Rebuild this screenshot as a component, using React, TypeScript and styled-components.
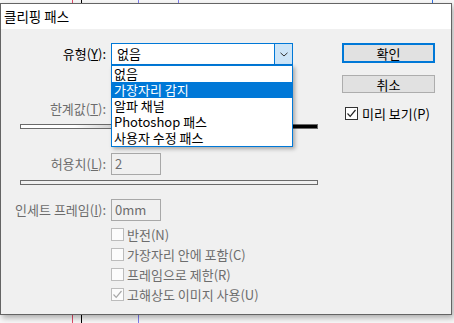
import styled, { createGlobalStyle } from "styled-components";

const GlobalStyle = createGlobalStyle`
  html, body {
    height: 100%;
  }
  body {
    margin: 0;
    font-family: "Noto Sans CJK KR", "Noto Sans", sans-serif;
    background:
      linear-gradient(#e04a68, #e04a68) 72px 0 / 1px 100% no-repeat,
      linear-gradient(#000, #000) 81px 0 / 1px 100% no-repeat,
      linear-gradient(#7c7cf2, #7c7cf2) 138px 0 / 1px 100% no-repeat,
      linear-gradient(#7c7cf2, #7c7cf2) 178px 0 / 1px 3px no-repeat,
      linear-gradient(#2f6fe0, #2f6fe0) 432px 0 / 1px 3px no-repeat,
      #f8f8f8;
  }
`;

const Window = styled.div`
  margin-top: 3px;
  width: 452px;
  height: 312px;
  box-sizing: border-box;
  border: 1px solid #646464;
  background: #f0f0f0;
  display: flex;
  flex-direction: column;
  box-shadow: 2px 3px 6px rgba(0, 0, 0, 0.3);
  font-size: 13px;
  color: #000;
`;

const TitleBar = styled.div`
  height: 25px;
  background: #fff;
  padding-left: 3px;
  font-size: 13.5px;
  line-height: 24px;
`;

const Body = styled.div`
  flex: 1;
  display: grid;
  grid-template-columns: 341px 93px;
  padding-top: 14px;
`;

const Form = styled.div`
  display: flex;
  flex-direction: column;
`;

const Row = styled.div<{ top?: number }>`
  display: flex;
  align-items: center;
  column-gap: 5px;
  margin-top: ${({ top }) => top ?? 0}px;
`;

const Label = styled.div<{ disabled?: boolean }>`
  width: 105px;
  text-align: right;
  line-height: 16px;
  white-space: nowrap;
  color: ${({ disabled }) => (disabled ? "#6d6d6d" : "#000")};
  u {
    text-decoration: underline;
    text-underline-offset: 1px;
  }
`;

const ComboWrap = styled.div`
  position: relative;
`;

const Combo = styled.div`
  width: 182px;
  height: 22px;
  box-sizing: border-box;
  border: 1px solid #0078d7;
  background: #fff;
  display: flex;
  align-items: center;
`;

const ComboValue = styled.div`
  flex: 1;
  padding-left: 5px;
  line-height: 20px;
`;

const ComboButton = styled.div`
  width: 17px;
  height: 20px;
  background: #cce4f7;
  border-left: 1px solid #0078d7;
  display: flex;
  align-items: center;
  justify-content: center;
`;

const DropList = styled.div`
  position: absolute;
  top: 22px;
  left: 0;
  width: 182px;
  box-sizing: border-box;
  border: 1px solid #0078d7;
  background: #fff;
  box-shadow: 2px 2px 4px rgba(0, 0, 0, 0.3);
  z-index: 2;
`;

const DropItem = styled.div<{ active?: boolean }>`
  height: 16px;
  line-height: 16px;
  padding-left: 2px;
  white-space: nowrap;
  background: ${({ active }) => (active ? "#0078d7" : "transparent")};
  color: ${({ active }) => (active ? "#fff" : "#000")};
`;

const Slider = styled.div<{ top: number; shade?: boolean }>`
  margin-top: ${({ top }) => top}px;
  margin-left: 19px;
  width: 298px;
  height: 5px;
  box-sizing: border-box;
  border: 1px solid #6a6a6a;
  background: ${({ shade }) =>
    shade ? "linear-gradient(to right, #fff 18%, #000 92%)" : "#f0f0f0"};
`;

const TextInput = styled.div`
  width: 50px;
  height: 22px;
  box-sizing: border-box;
  border: 1px solid #a8a8a8;
  padding-left: 3px;
  line-height: 20px;
  color: #6d6d6d;
`;

const CheckList = styled.div`
  margin-top: 7px;
  margin-left: 110px;
  display: flex;
  flex-direction: column;
  row-gap: 7px;
`;

const CheckRow = styled.div<{ disabled?: boolean }>`
  display: flex;
  align-items: center;
  column-gap: 3px;
  height: 13px;
  line-height: 13px;
  white-space: nowrap;
  color: ${({ disabled }) => (disabled ? "#6d6d6d" : "#000")};
`;

const Box = styled.div<{ disabled?: boolean }>`
  flex: none;
  width: 13px;
  height: 13px;
  box-sizing: border-box;
  border: 1px solid ${({ disabled }) => (disabled ? "#bcbcbc" : "#333")};
  background: ${({ disabled }) => (disabled ? "#fcfcfc" : "#fff")};
  display: flex;
  align-items: center;
  justify-content: center;
`;

const Side = styled.div`
  display: flex;
  flex-direction: column;
`;

const Button = styled.div<{ primary?: boolean; top?: number }>`
  margin-top: ${({ top }) => top ?? 0}px;
  height: ${({ primary }) => (primary ? 20 : 18)}px;
  box-sizing: border-box;
  border: ${({ primary }) => (primary ? "2px solid #0078d7" : "1px solid #adadad")};
  background: #e1e1e1;
  display: flex;
  align-items: center;
  justify-content: center;
`;

const Preview = styled(CheckRow)`
  margin-top: 14px;
  margin-left: 3px;
  column-gap: 4px;
`;

const Check = ({ color }: { color: string }) => (
  <svg width="11" height="11" viewBox="0 0 11 11">
    <polyline points="1.5,5.5 4.2,8.3 9.5,2" fill="none" stroke={color} strokeWidth="1.2" />
  </svg>
);

const types = ["없음", "가장자리 감지", "알파 채널", "Photoshop 패스", "사용자 수정 패스"];

const options = [
  { label: "반전(N)", checked: false },
  { label: "가장자리 안에 포함(C)", checked: false },
  { label: "프레임으로 제한(R)", checked: false },
  { label: "고해상도 이미지 사용(U)", checked: true },
];

export default function App() {
  return (
    <>
      <GlobalStyle />
      <Window>
        <TitleBar>클리핑 패스</TitleBar>
        <Body>
          <Form>
            <Row>
              <Label>유형(<u>Y</u>):</Label>
              <ComboWrap>
                <Combo>
                  <ComboValue>없음</ComboValue>
                  <ComboButton>
                    <svg width="8" height="5" viewBox="0 0 8 5">
                      <polyline points="0.5,0.8 4,4 7.5,0.8" fill="none" stroke="#333" strokeWidth="1" />
                    </svg>
                  </ComboButton>
                </Combo>
                <DropList>
                  {types.map((t) => (
                    <DropItem key={t} active={t === "가장자리 감지"}>
                      {t}
                    </DropItem>
                  ))}
                </DropList>
              </ComboWrap>
            </Row>
            <Row top={36}>
              <Label disabled>한계값(<u>T</u>):</Label>
            </Row>
            <Slider top={7} shade />
            <Row top={24}>
              <Label disabled>허용치(<u>L</u>):</Label>
              <TextInput>2</TextInput>
            </Row>
            <Slider top={5} />
            <Row top={14}>
              <Label disabled>인세트 프레임(<u>I</u>):</Label>
              <TextInput>0mm</TextInput>
            </Row>
            <CheckList>
              {options.map((o) => (
                <CheckRow key={o.label} disabled>
                  <Box disabled>{o.checked && <Check color="#a8a8a8" />}</Box>
                  {o.label}
                </CheckRow>
              ))}
            </CheckList>
          </Form>
          <Side>
            <Button primary>확인</Button>
            <Button top={12}>취소</Button>
            <Preview>
              <Box>
                <Check color="#222" />
              </Box>
              미리 보기(P)
            </Preview>
          </Side>
        </Body>
      </Window>
    </>
  );
}
